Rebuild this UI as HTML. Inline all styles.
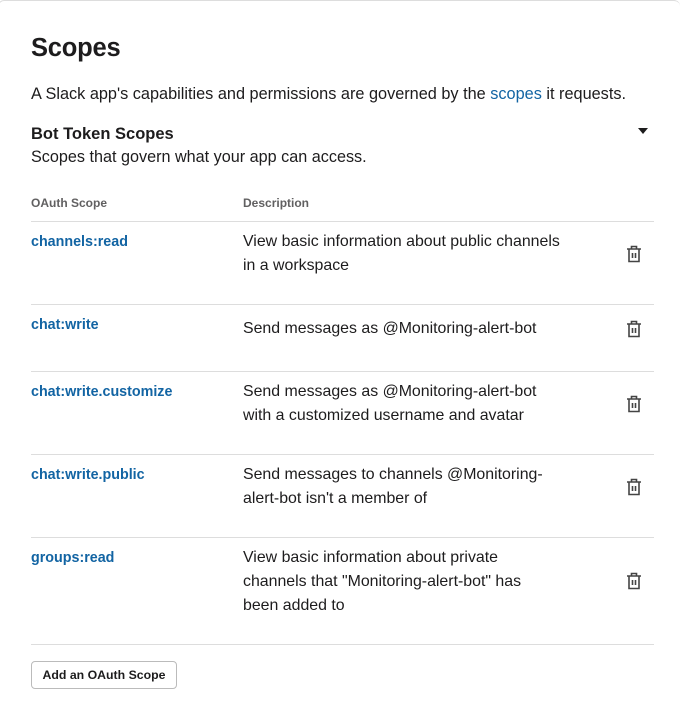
<!DOCTYPE html>
<html style="overflow:hidden;height:703px"><head><meta charset="utf-8"><style>
body{margin:0;background:#fff;width:681px;height:703px;overflow:hidden;position:relative;font-family:"Liberation Sans",sans-serif;color:#1d1c1d}
.card{position:absolute;left:-2px;top:0;width:682px;height:703px;border:1px solid #ddd;border-bottom:none;border-right:none;border-radius:6px 6px 0 0;box-sizing:border-box}
.a{position:absolute;white-space:nowrap}
h1{position:absolute;left:31px;top:34px;margin:0;font-size:25.5px;font-weight:bold;letter-spacing:-0.2px}
.t{font-size:15.9px;line-height:24px}
.n{font-size:14.3px;font-weight:bold;color:#1264a3;line-height:24px}
.line{position:absolute;left:31px;width:623px;height:1px;background:#ddd}
.hd{font-size:12px;font-weight:bold;color:#616061}
svg.tr{position:absolute;width:16px;height:20px}
.btn{position:absolute;left:31px;top:661px;width:146px;height:28px;border:1px solid #bbb;border-radius:4px;box-sizing:border-box;font-size:12.3px;font-weight:bold;text-align:center;line-height:26px}
</style></head><body>
<div class="card"></div>
<h1>Scopes</h1>
<div class="a t" style="left:31px;top:82px;font-size:16.3px">A Slack app's capabilities and permissions are governed by the <span style="color:#1264a3">scopes</span> it requests.</div>
<div class="a" style="left:31px;top:122px;font-size:16.5px;font-weight:bold;line-height:24px">Bot Token Scopes</div>
<div class="a t" style="left:31px;top:145px;font-size:16.2px">Scopes that govern what your app can access.</div>
<div class="a" style="left:638px;top:128px;width:0;height:0;border-left:5px solid transparent;border-right:5px solid transparent;border-top:6px solid #1d1c1d"></div>
<div class="a hd" style="left:31px;top:196px">OAuth Scope</div>
<div class="a hd" style="left:243px;top:196px">Description</div>
<div class="line" style="top:221px"></div>
<div class="line" style="top:304px"></div>
<div class="line" style="top:371px"></div>
<div class="line" style="top:454px"></div>
<div class="line" style="top:537px"></div>
<div class="line" style="top:644px"></div>

<div class="a n" style="left:31px;top:230px">channels:read</div>
<div class="a t" style="left:243px;top:230px">View basic information about public channels<br>in a workspace</div>
<div class="a n" style="left:31px;top:313px">chat:write</div>
<div class="a t" style="left:243px;top:317px">Send messages as @Monitoring-alert-bot</div>
<div class="a n" style="left:31px;top:380px">chat:write.customize</div>
<div class="a t" style="left:243px;top:380px">Send messages as @Monitoring-alert-bot<br>with a customized username and avatar</div>
<div class="a n" style="left:31px;top:463px">chat:write.public</div>
<div class="a t" style="left:243px;top:463px">Send messages to channels @Monitoring-<br>alert-bot isn't a member of</div>
<div class="a n" style="left:31px;top:546px">groups:read</div>
<div class="a t" style="left:243px;top:546px">View basic information about private<br>channels that "Monitoring-alert-bot" has<br>been added to</div>

<svg width="0" height="0" style="position:absolute"><defs><g id="tr" fill="none" stroke="#444" stroke-width="1.6"><path d="M1 5h14M5.5 5V2.5h5V5"/><path d="M3 5v12.5h10V5"/><path d="M6.5 9v5M9.5 9v5"/></g></defs></svg>
<svg class="tr" style="left:626px;top:244px" viewBox="0 0 16 20"><use href="#tr"/></svg>
<svg class="tr" style="left:626px;top:319px" viewBox="0 0 16 20"><use href="#tr"/></svg>
<svg class="tr" style="left:626px;top:394px" viewBox="0 0 16 20"><use href="#tr"/></svg>
<svg class="tr" style="left:626px;top:477px" viewBox="0 0 16 20"><use href="#tr"/></svg>
<svg class="tr" style="left:626px;top:571px" viewBox="0 0 16 20"><use href="#tr"/></svg>

<div class="btn">Add an OAuth Scope</div>
</body></html>
